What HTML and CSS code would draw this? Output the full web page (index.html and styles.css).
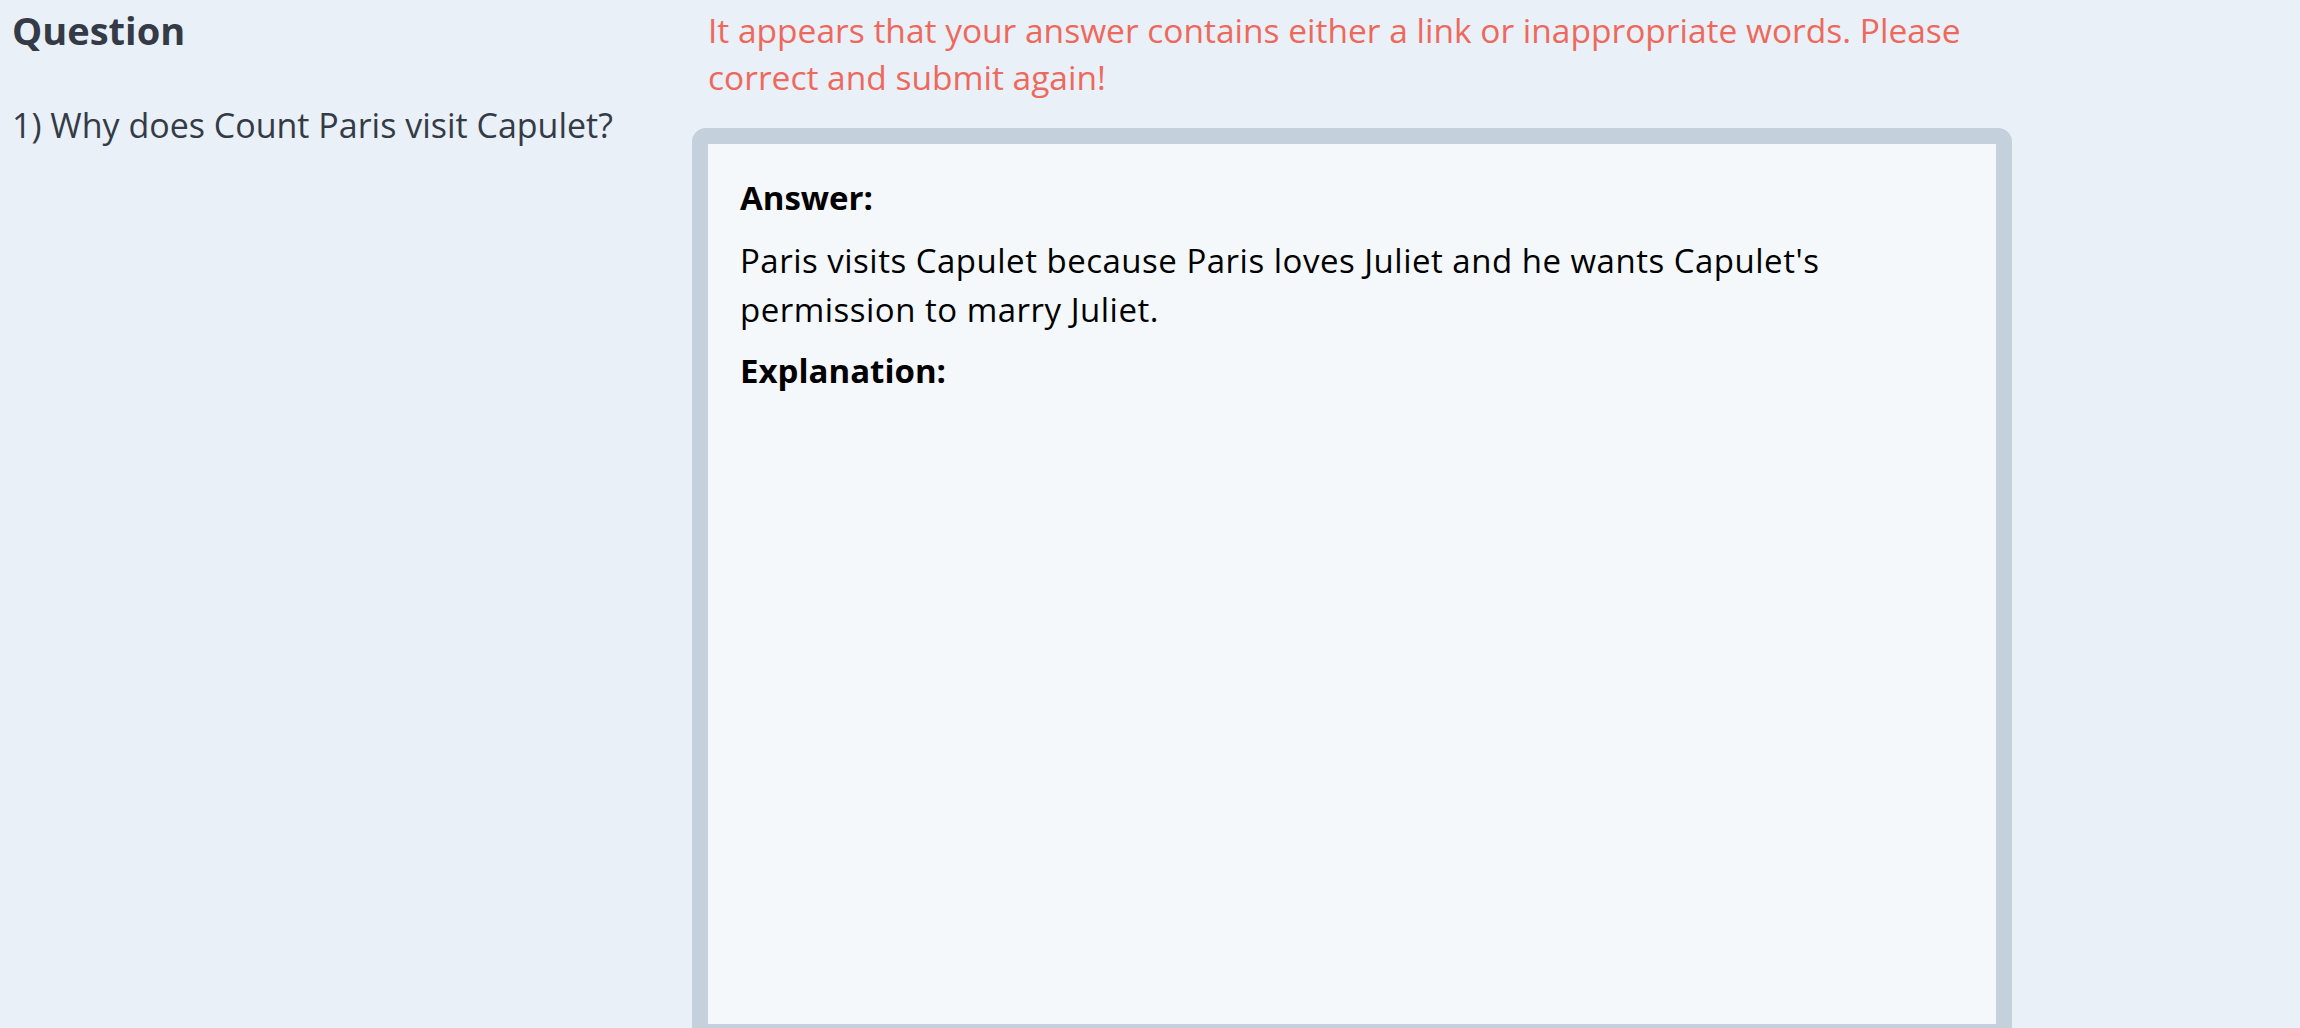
FILE: index.html
```html
<!DOCTYPE html>
<html lang="en">
<head>
  <meta charset="UTF-8">
  <meta name="viewport" content="width=device-width, initial-scale=1">
  <title>Question</title>
  <link rel="stylesheet" href="styles.css">
</head>
<body>
  <div class="page">
    <div class="question-col">
      <h2 class="title">Question</h2>
      <p class="question-text">1) Why does Count Paris visit Capulet?</p>
    </div>

    <div class="answer-col">
      <p class="error">It appears that your answer contains either a link or inappropriate words. Please correct and submit again!</p>
      <div class="answer-box">
        <div class="answer-inner">
          <h4 class="label">Answer:</h4>
          <p class="answer-text">Paris visits Capulet because Paris loves Juliet and he wants Capulet's permission to marry Juliet.</p>
          <h4 class="label">Explanation:</h4>
        </div>
      </div>
    </div>
  </div>
</body>
</html>
```

FILE: styles.css
```css
:root {
  --bg: #e9f0f8;
  --text: #343b46;
  --border: #c4d0dc;
  --card: #f4f8fb;
  --error: #ee695c;
}

body {
  font-family: "Open Sans", Lato, sans-serif;
  font-variant-ligatures: none;
  background: var(--bg);
  color: var(--text);
  margin: 0;
}

.page {
  display: grid;
  grid-template-columns: 680px 1320px;
  padding: 6px 12px 0;
}

.title {
  font-size: 38px;
  line-height: 48px;
  font-weight: 700;
  margin: 0;
}

.question-text {
  font-size: 34px;
  line-height: 52px;
  margin: 45px 0 0;
}

.error {
  color: var(--error);
  font-size: 33.5px;
  line-height: 47px;
  margin: 1px 0 27px;
  padding: 0 16px;
}

.answer-box {
  border: 16px solid var(--border);
  border-radius: 14px;
  overflow: hidden;
}

.answer-inner {
  background: var(--card);
  box-sizing: border-box;
  height: 880px;
  padding: 30px 64px 30px 32px;
  color: #000;
}

.label {
  font-size: 33px;
  line-height: 48px;
  font-weight: 700;
  margin: 0;
}

.answer-text {
  font-size: 33px;
  line-height: 49px;
  letter-spacing: 0.5px;
  margin: 14px 0 13px;
}
```
